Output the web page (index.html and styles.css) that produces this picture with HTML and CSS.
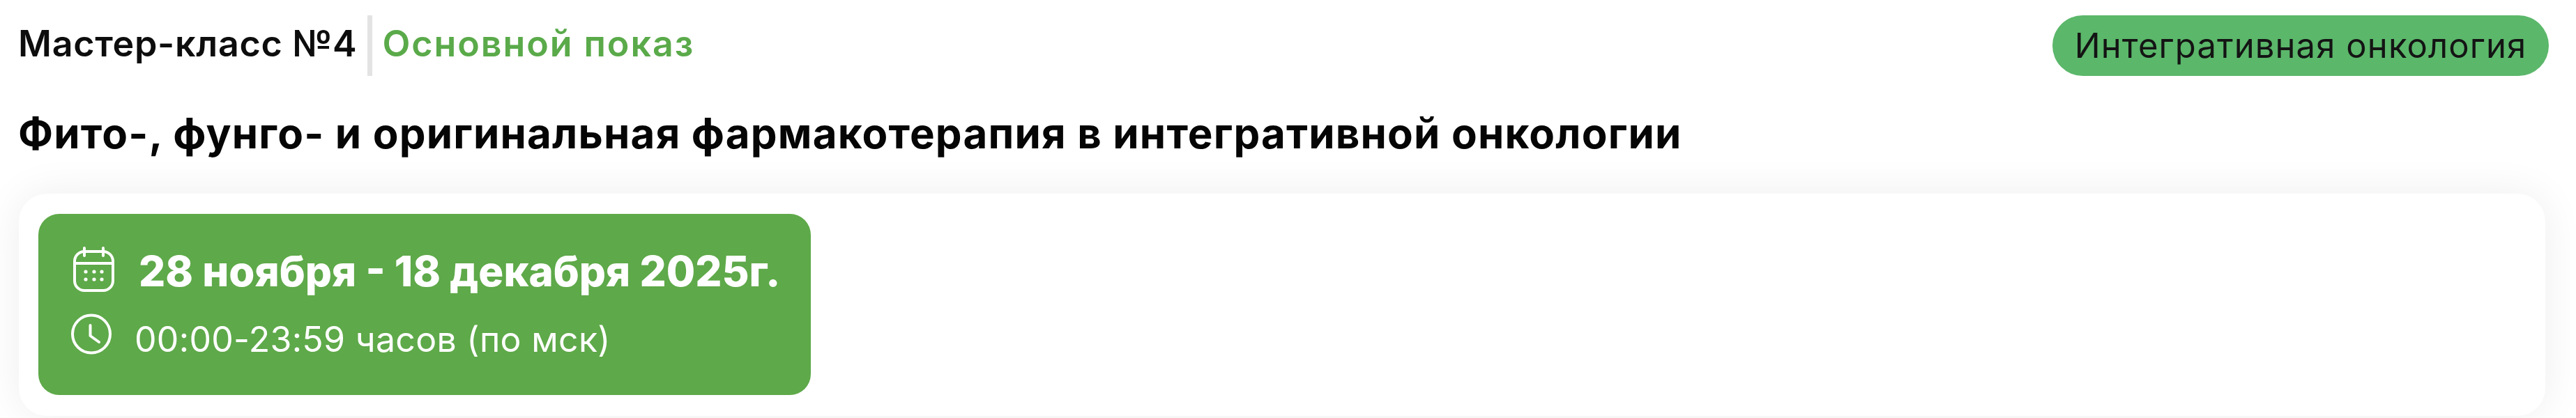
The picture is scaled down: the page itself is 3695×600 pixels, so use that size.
FILE: index.html
```html
<!DOCTYPE html>
<html lang="ru">
<head>
<meta charset="utf-8">
<title>Мастер-класс №4</title>
<link rel="stylesheet" href="styles.css">
</head>
<body>
<main class="page">
  <header class="head">
    <div class="label">
      <span class="num">Мастер-класс №4</span>
      <span class="divider"></span>
      <span class="kind">Основной показ</span>
    </div>
    <span class="tag">Интегративная онкология</span>
  </header>
  <h1 class="title">Фито-, фунго- и оригинальная фармакотерапия в интегративной онкологии</h1>
  <section class="card">
    <div class="when">
      <div class="row row-date">
        <svg class="icon cal" viewBox="0 0 59 65" fill="none" stroke="#fff" stroke-width="4" stroke-linecap="round">
          <rect x="2" y="7" width="55" height="56" rx="14"/>
          <path d="M2 24H57M16 2V13M43 2V13"/>
          <g fill="#fff" stroke="none">
            <circle cx="18" cy="36" r="2.6"/><circle cx="30" cy="36" r="2.6"/><circle cx="41" cy="36" r="2.6"/>
            <circle cx="18" cy="47" r="2.6"/><circle cx="30" cy="47" r="2.6"/><circle cx="41" cy="47" r="2.6"/>
          </g>
        </svg>
        <span class="date">28 ноября - 18 декабря 2025г.</span>
      </div>
      <div class="row row-time">
        <svg class="icon clock" viewBox="0 0 58 59" fill="none" stroke="#fff" stroke-width="4" stroke-linecap="round" stroke-linejoin="round">
          <circle cx="29" cy="29.5" r="27"/>
          <path d="M27.500 17V32L40 41"/>
        </svg>
        <span class="time">00:00-23:59 часов (по мск)</span>
      </div>
    </div>
  </section>
</main>
</body>
</html>
```
FILE: styles.css
```css
* { box-sizing: border-box; }
html, body { margin: 0; background: #fff; }
body { height: 600px; overflow: hidden; font-family: Inter, "Noto Sans", sans-serif; color: #0d0d0d; }
.page { padding: 22px 39px 0 26px; }
.head { display: flex; justify-content: space-between; align-items: center; height: 87px; }
.label { display: flex; align-items: center; height: 87px; font-size: 52px; font-weight: 600; }
.num { letter-spacing: .7px; margin-bottom: 6px; }
.divider { width: 7px; height: 87px; margin: 0 14px 0 15px; background: #e3e3e3; }
.kind { color: #5aaa4a; letter-spacing: 1.9px; margin-bottom: 6px; }
.tag { display: flex; align-items: center; justify-content: center; width: 712px; height: 87px; border-radius: 44px; background: #5bb76a; font-size: 49px; letter-spacing: 1.1px; color: #141414; }
.title { margin: 49px 0 0; font-size: 60px; line-height: 66px; font-weight: 700; letter-spacing: 1.18px; color: #050505; white-space: nowrap; }
.card { width: 3624px; height: 319px; margin: 54px 0 0 1px; padding: 29px 28px; border-radius: 40px; background: #fff; box-shadow: 0 0 60px rgba(20, 20, 60, .07); }
.when { width: 1108px; height: 260px; padding: 47px 0 0 47px; border-radius: 30px; background: #5ea949; color: #fff; }
.row { display: flex; align-items: center; }
.icon { flex: none; display: block; }
.row-date { height: 65px; padding-left: 3px; }
.row-time { height: 59px; margin-top: 31px; }
.cal { width: 59px; height: 65px; margin-right: 35px; }
.clock { width: 58px; height: 59px; margin-right: 33px; }
.date { margin-top: 5px; font-size: 60px; font-weight: 800; }
.time { margin-top: 14px; font-size: 50px; font-weight: 400; letter-spacing: .3px; }
```
